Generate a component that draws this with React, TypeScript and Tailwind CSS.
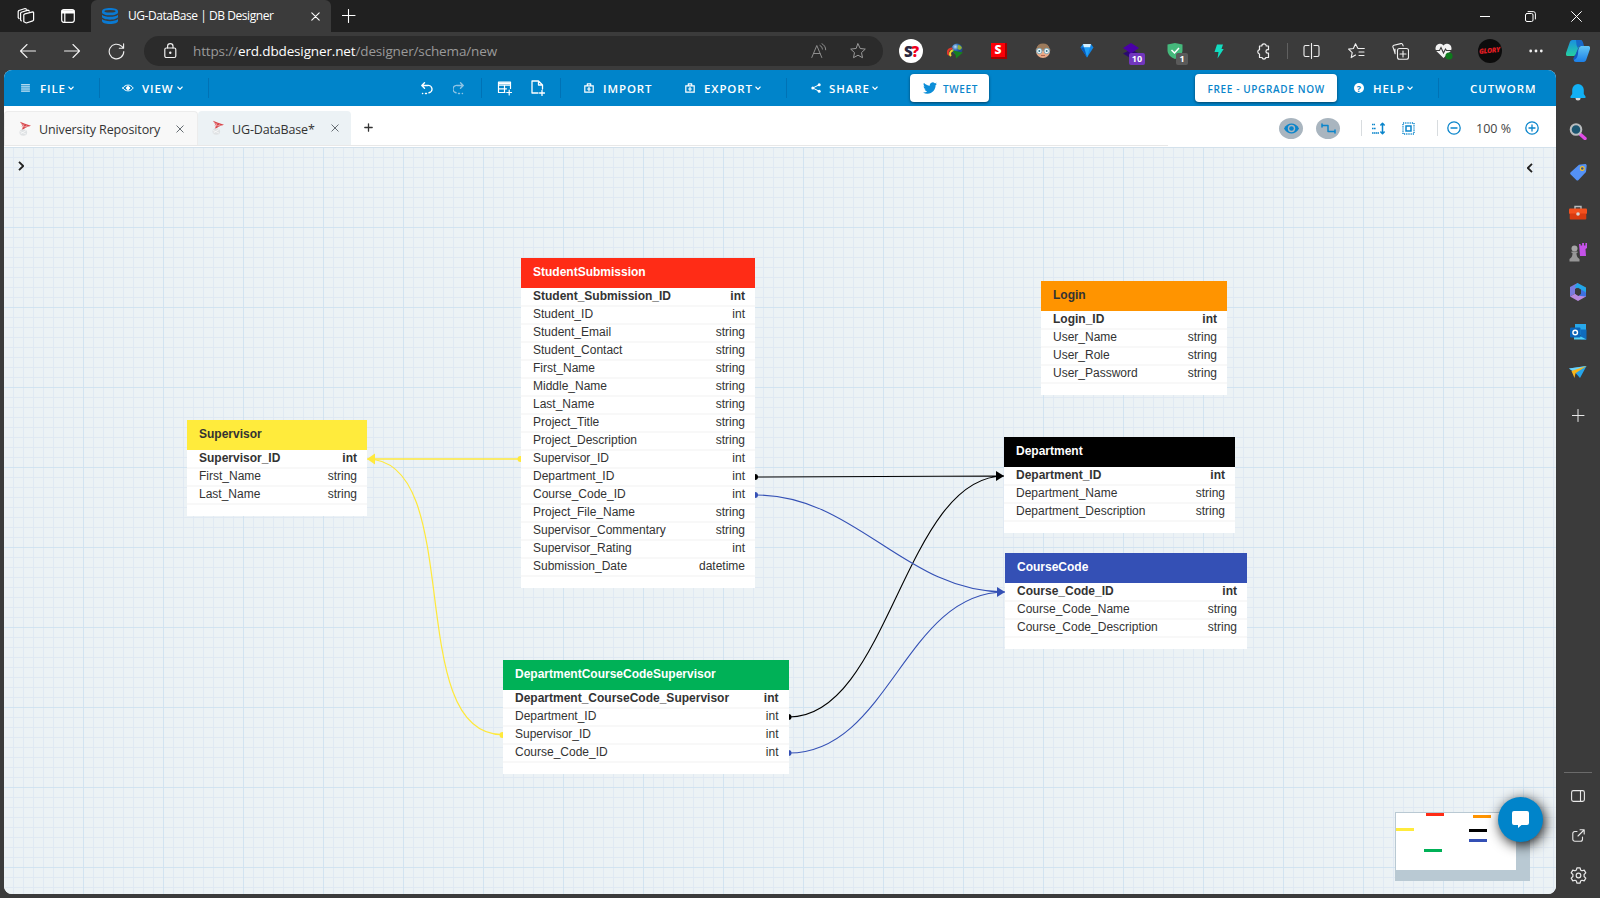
import React from "react";

type Field = [name: string, type: string];

interface TableDef {
  name: string;
  box: string;
  head: string;
  fields: Field[];
}

const TABLES: TableDef[] = [
  {
    name: "StudentSubmission",
    box: "left-[517px] top-[111px] w-[234px]",
    head: "bg-[#ff2c16] text-white",
    fields: [
      ["Student_Submission_ID", "int"],
      ["Student_ID", "int"],
      ["Student_Email", "string"],
      ["Student_Contact", "string"],
      ["First_Name", "string"],
      ["Middle_Name", "string"],
      ["Last_Name", "string"],
      ["Project_Title", "string"],
      ["Project_Description", "string"],
      ["Supervisor_ID", "int"],
      ["Department_ID", "int"],
      ["Course_Code_ID", "int"],
      ["Project_File_Name", "string"],
      ["Supervisor_Commentary", "string"],
      ["Supervisor_Rating", "int"],
      ["Submission_Date", "datetime"],
    ],
  },
  {
    name: "Supervisor",
    box: "left-[183px] top-[273px] w-[180px]",
    head: "bg-[#ffeb3c] text-[#333]",
    fields: [
      ["Supervisor_ID", "int"],
      ["First_Name", "string"],
      ["Last_Name", "string"],
    ],
  },
  {
    name: "Login",
    box: "left-[1037px] top-[134px] w-[186px]",
    head: "bg-[#ff9400] text-[#333]",
    fields: [
      ["Login_ID", "int"],
      ["User_Name", "string"],
      ["User_Role", "string"],
      ["User_Password", "string"],
    ],
  },
  {
    name: "Department",
    box: "left-[1000px] top-[290px] w-[231px]",
    head: "bg-black text-white",
    fields: [
      ["Department_ID", "int"],
      ["Department_Name", "string"],
      ["Department_Description", "string"],
    ],
  },
  {
    name: "CourseCode",
    box: "left-[1001px] top-[406px] w-[242px]",
    head: "bg-[#3450b5] text-white",
    fields: [
      ["Course_Code_ID", "int"],
      ["Course_Code_Name", "string"],
      ["Course_Code_Description", "string"],
    ],
  },
  {
    name: "DepartmentCourseCodeSupervisor",
    box: "left-[499px] top-[513px] w-[285.500px]",
    head: "bg-[#00b157] text-white",
    fields: [
      ["Department_CourseCode_Supervisor", "int"],
      ["Department_ID", "int"],
      ["Supervisor_ID", "int"],
      ["Course_Code_ID", "int"],
    ],
  },
];

function Svg({
  w,
  h = w,
  vb,
  sw = 1,
  className = "",
  children,
}: {
  w: number;
  h?: number;
  vb?: string;
  sw?: number;
  className?: string;
  children: React.ReactNode;
}) {
  return (
    <svg
      width={w}
      height={h}
      viewBox={vb ?? `0 0 ${w} ${h}`}
      fill="none"
      stroke="currentColor"
      strokeWidth={sw}
      strokeLinecap="round"
      strokeLinejoin="round"
      className={`block shrink-0 ${className}`}
    >
      {children}
    </svg>
  );
}

function Table({ t }: { t: TableDef }) {
  return (
    <div className={`absolute bg-white ${t.box}`}>
      <div className={`h-[30px] pl-3 text-[12px] leading-[29px] font-bold ${t.head}`}>{t.name}</div>
      <div className="pt-px pb-[11px] text-[12px] text-[#333]">
        {t.fields.map(([n, ty], i) => (
          <div
            key={n}
            className={`flex h-[18px] justify-between border-b-2 border-[#f8f8f8] pr-[10px] pl-3 leading-[14px] ${
              i === 0 ? "font-bold" : ""
            }`}
          >
            <span>{n}</span>
            <span>{ty}</span>
          </div>
        ))}
      </div>
    </div>
  );
}

function Chevron() {
  return (
    <Svg w={6} h={5} sw={1.1}>
      <path d="M.8 1L3 3.300 5.200 1" />
    </Svg>
  );
}

function Divider() {
  return <div className="h-5 w-px shrink-0 bg-[#0072b5]" />;
}

function Briefcase() {
  return (
    <Svg w={10} h={10} sw={1.2}>
      <path d="M.8 2.8h8.4v6.4H.8z" strokeLinejoin="miter" />
      <path d="M3.3 2.6V.8h3.4v1.8M5 4.3v3.4M3.6 6h2.8" />
    </Svg>
  );
}

function DbMark() {
  return (
    <svg width="14" height="16" viewBox="0 0 14 16" className="block shrink-0">
      <path d="M2 .8l5 2 6 2-5 1.800-4.500 3L5 5.500z" fill="#d8474c" />
      <path d="M3 2l3 3M6 3L4.500 7.500M9 4L7 6.500M3 5.500h8" stroke="#f0b9ba" strokeWidth=".5" />
      <ellipse cx="5.300" cy="11.500" rx="3.800" ry="3.200" fill="#dfe2e4" />
      <path d="M2 10.500l6 2.500M2.500 13l5.500-3.500" stroke="#fff" strokeWidth=".6" />
    </svg>
  );
}

function TitleBar() {
  return (
    <div className="flex h-8 items-center bg-[#202020] text-white">
      <div className="w-[41px] shrink-0 pl-[17px]">
        <Svg w={18} h={18} sw={1.2}>
          <path d="M6.200 8l1-.9 8-2.100.8.700v7.500l-.8.900-6.500 2.100L6.200 15z" transform="translate(.6 -.2)" />
          <path d="M4.300 13.800L3.600 13V6.200l.8-1 6.500-2.100 1.400.9" />
          <path d="M2 11.500l-.8-.8V4.300l.7-.8 6.200-2 1.400.8" />
        </Svg>
      </div>
      <div className="w-[50px] shrink-0 pl-5">
        <Svg w={14} h={14} sw={1.2}>
          <rect x=".7" y=".7" width="12.600" height="12.600" rx="2.200" />
          <path d="M1 1.800h12V4H1z" fill="currentColor" />
          <path d="M3.800 4v9" />
        </Svg>
      </div>
      <div className="flex h-8 w-[240px] shrink-0 items-center rounded-t-md bg-[#3b3b3b]">
        <div className="w-[37px] shrink-0 pl-[11px]">
          <svg width="16" height="16" viewBox="0 0 16 16" fill="#0a7ad3">
            <path d="M0 3C0 1.300 3.600 0 8 0s8 1.300 8 3v1.400C16 6 12.400 7.300 8 7.300S0 6 0 4.400z" />
            <path d="M0 6.700c1.500 1.400 4.500 2.100 8 2.100s6.500-.7 8-2.100v2.100c0 1.600-3.600 2.900-8 2.900S0 10.400 0 8.800z" />
            <path d="M0 11.100c1.500 1.400 4.500 2.100 8 2.100s6.500-.7 8-2.100V13c0 1.700-3.600 3-8 3s-8-1.300-8-3z" />
            <ellipse cx="8" cy="3.200" rx="5.600" ry="1.300" fill="#3b3b3b" />
          </svg>
        </div>
        <div className="w-[183px] shrink-0 font-['Open_Sans',sans-serif] text-[12px] tracking-[-0.450px] whitespace-nowrap">
          UG-DataBase | DB Designer
        </div>
        <Svg w={9} h={9} sw={1.1}>
          <path d="M.8.8l7.400 7.400M8.200.8L.8 8.200" />
        </Svg>
      </div>
      <div className="grow pl-[11px]">
        <Svg w={14} h={14} sw={1.1}>
          <path d="M6.500.5v13M0 6.500h13" />
        </Svg>
      </div>
      <div className="flex w-[138px] shrink-0">
        <div className="flex w-[46px] items-center justify-center">
          <div className="h-px w-[10px] bg-white" />
        </div>
        <div className="flex w-[46px] items-center justify-center pr-px">
          <Svg w={11} h={11}>
            <rect x=".5" y="2.500" width="7.500" height="8" rx="1.500" />
            <path d="M3 .6h5.200A2.200 2.200 0 0110.400 2.800V8" />
          </Svg>
        </div>
        <div className="flex w-[46px] items-center justify-center pr-px">
          <Svg w={11} h={11}>
            <path d="M.6.6l9.800 9.800M10.400.6L.6 10.400" />
          </Svg>
        </div>
      </div>
    </div>
  );
}

function Slot({ children, className = "w-11" }: { children?: React.ReactNode; className?: string }) {
  return <div className={`flex shrink-0 items-center justify-center ${className}`}>{children}</div>;
}

function AddressBar() {
  return (
    <div className="flex h-[38px] items-center bg-[#3b3b3b] text-[#f0f0f0]">
      <Slot className="ml-[6px] w-11">
        <Svg w={17} h={15} sw={1.1}>
          <path d="M15.500 7H.5M7 .5L.5 7 7 13.500" />
        </Svg>
      </Slot>
      <Slot>
        <Svg w={17} h={15} sw={1.1}>
          <path d="M.5 7h15M9 .5L15.500 7 9 13.500" />
        </Svg>
      </Slot>
      <Slot>
        <Svg w={17} h={17} sw={1.1}>
          <path d="M15.800 8.500a7.300 7.300 0 11-2.300-5.300L15.500 5M15.600.8v4.400h-4.300" />
        </Svg>
      </Slot>
      <div className="ml-[6px] flex h-[30px] w-[739px] shrink-0 items-center rounded-full bg-[#2b2b2b]">
        <div className="w-[49px] shrink-0 pl-5">
          <Svg w={13} h={16} sw={1.2}>
            <rect x=".8" y="5" width="11" height="9.500" rx="1.500" />
            <path d="M3.600 5V3.300a2.700 2.700 0 015.400 0V5" />
            <circle cx="6.300" cy="9.800" r=".6" fill="currentColor" />
          </Svg>
        </div>
        <div className="grow font-['Open_Sans',sans-serif] text-[13.500px] tracking-[-0.140px] whitespace-nowrap text-[#9a9a9a]">
          https://<span className="text-white">erd.dbdesigner.net</span>/designer/schema/new
        </div>
        <div className="w-[39px] shrink-0 text-[#8d8d8d]">
          <Svg w={16} h={16}>
            <path d="M.8 14.500L5.800 2.500l5 12M2.600 10.500h6.400M9 2.500c1.500.8 2.300 2 2.400 3.600M11 .8c2.300 1.200 3.600 3.200 3.700 6" />
          </Svg>
        </div>
        <div className="w-[33px] shrink-0 text-[#9a9a9a]">
          <Svg w={16} h={16}>
            <path d="M8 .8l2.200 4.700 5.100.6-3.800 3.500 1 5.100L8 12.200l-4.500 2.500 1-5.100L.7 6.100l5.100-.6z" />
          </Svg>
        </div>
      </div>
      <Slot className="ml-[6px] w-11">
        <div className="flex size-6 items-center justify-center rounded-full bg-white font-['Open_Sans',sans-serif] text-[15px] font-extrabold tracking-[-1px] text-[#2b2740]">
          S<span className="text-[#f0001c]">?</span>
        </div>
      </Slot>
      <Slot>
        <svg width="16" height="16" viewBox="0 0 16 16">
          <defs>
            <radialGradient id="globe" cx=".35" cy=".3">
              <stop offset="0" stopColor="#b9dcf8" />
              <stop offset=".6" stopColor="#2f6fb8" />
              <stop offset="1" stopColor="#1d4a90" />
            </radialGradient>
          </defs>
          <circle cx="10" cy="6" r="5.500" fill="url(#globe)" />
          <path d="M11 2c2 0 3.500 1 4 3l-2 2-2.500-1z" fill="#8fae3a" />
          <path d="M2 12C-.5 9.500 1 5.500 5.500 5.500" stroke="#e2382b" strokeWidth="2" fill="none" />
          <path d="M4 13C2 10.800 3 7.800 6.500 7.300" stroke="#f3d52f" strokeWidth="2" fill="none" />
          <path d="M5.500 7.500L16 9.500 9 15.500l-.3-3.300z" fill="#17821f" />
        </svg>
      </Slot>
      <Slot>
        <div className="h-4 w-4 border-r-2 border-b-2 border-[#a30000] bg-[#fb0007] text-center font-['Open_Sans',sans-serif] text-[12px] leading-[13px] font-extrabold text-white">
          S
        </div>
      </Slot>
      <Slot>
        <svg width="16" height="16" viewBox="0 0 16 16">
          <circle cx="8" cy="8" r="7" fill="#e8a987" />
          <path d="M1.500 6a6.600 6.600 0 0113 0z" fill="#9c7a5b" />
          <path d="M0 7h16" stroke="#6a5a50" strokeWidth="1" />
          <circle cx="4.300" cy="8" r="2.700" fill="#f1fafc" stroke="#7fa9b8" strokeWidth="1" />
          <circle cx="11.700" cy="8" r="2.700" fill="#f1fafc" stroke="#7fa9b8" strokeWidth="1" />
          <circle cx="4.300" cy="8" r="1" fill="#2f6f86" />
          <circle cx="11.700" cy="8" r="1" fill="#2f6f86" />
          <path d="M6 12.500h4" stroke="#b06a56" />
        </svg>
      </Slot>
      <Slot>
        <svg width="14" height="16" viewBox="0 0 14 16">
          <path d="M3 1h8l2.500 3.500L7 14.500.5 4.500z" fill="#1287e6" />
          <path d="M3 1h8l-1 3.500H4z" fill="#d4f0ff" />
          <path d="M4 4.500h6L7 14.500z" fill="#1ea0f8" />
          <path d="M.5 4.500H4L7 14.500z" fill="#0a58b8" />
        </svg>
      </Slot>
      <Slot>
        <div className="relative">
          <svg width="16" height="16" viewBox="0 0 16 16">
            <path d="M0 10.500l8-4 8 4-8 5z" fill="#2a0a70" />
            <path d="M0 5l8-5 8 5-8 5.500z" fill="#4a00a8" />
          </svg>
          <span className="absolute top-[10px] left-[6px] h-3 w-4 rounded-[2px] bg-[#7136bd] text-center font-['Open_Sans',sans-serif] text-[9px] leading-3 font-bold text-white">
            10
          </span>
        </div>
      </Slot>
      <Slot>
        <div className="relative">
          <svg width="16" height="16" viewBox="0 0 16 16">
            <path d="M8 0l7.500 1.500V7c0 4-3 7.500-7.500 9C3.500 14.500.5 11 .5 7V1.500z" fill="#45b97c" />
            <path d="M4.500 7l3 3 4.500-5" stroke="#fff" strokeWidth="1.500" fill="none" />
          </svg>
          <span className="absolute top-[10px] left-[9px] h-3 w-3 rounded-[2px] bg-[#5a5a5a] text-center font-['Open_Sans',sans-serif] text-[9px] leading-3 font-bold text-white">
            1
          </span>
        </div>
      </Slot>
      <Slot>
        <svg width="10" height="15" viewBox="0 0 10 15">
          <path d="M3 .5h6L7.500 5h2.200L3.500 14.500 4.500 8H.5z" fill="#12dcc0" />
        </svg>
      </Slot>
      <Slot>
        <Svg w={16} h={17} sw={1.2}>
          <path d="M4.500 3h2.300a2.200 2.200 0 014.400 0H13.500v3.700h-.8a1.700 1.700 0 000 3.500h.8V14.500h-2.600a2 2 0 01-3.900 0H4.500V11a2.200 2.200 0 010-4.300z" />
        </Svg>
      </Slot>
      <div className="ml-[2px] h-4 w-px shrink-0 bg-[#606060]" />
      <Slot className="ml-[2px] w-11 pr-px">
        <Svg w={17} h={16} sw={1.1}>
          <path d="M6 2.500H2.500A1.500 1.500 0 001 4v8a1.500 1.500 0 001.500 1.500H6M11 2.500h3.500A1.500 1.500 0 0116 4v8a1.500 1.500 0 01-1.500 1.500H11M8.500.5v15" />
        </Svg>
      </Slot>
      <Slot>
        <Svg w={17} h={16} sw={1.1}>
          <path d="M10.500 5.500L9.800 5.300 7.500.8 5.400 5.500l-4.800.6L4.200 9.600l-1 5 4.300-2.500M10.300 5.500h6M11 9h5M11 12.500h5" />
        </Svg>
      </Slot>
      <Slot>
        <Svg w={17} h={17} sw={1.1}>
          <rect x="5.500" y="5.500" width="11" height="10.800" rx="2" />
          <path d="M11 8v6M8 11h6M3.200 10.800L1 4.200c-.4-1 .1-1.600.9-1.900L8.800.6c.8-.2 1.500.1 1.800.8l.5 1.500M3 6v4.500" />
        </Svg>
      </Slot>
      <Slot>
        <svg width="18" height="17" viewBox="0 0 18 17">
          <path d="M8.500 15L1.500 8.200A4.200 4.200 0 018.500 2.500a4.200 4.200 0 017 5.700z" fill="#f2f2f2" />
          <path d="M0 7.500h4.500l1.500-3 2.500 5.500 2-4 1 1.500h5" stroke="#3b3b3b" strokeWidth="1.100" fill="none" />
          <circle cx="14" cy="13" r="3.600" fill="#0d7a1c" />
        </svg>
      </Slot>
      <Slot className="w-12">
        <div className="flex size-6 items-center justify-center rounded-full bg-[#0c0c0c] font-['Open_Sans',sans-serif] text-[7px] font-extrabold tracking-[-0.300px] text-[#e01c22] italic">
          <span className="-rotate-6">GLORY</span>
        </div>
      </Slot>
      <Slot>
        <Svg w={14} h={4}>
          <g fill="currentColor" stroke="none">
            <circle cx="1.700" cy="2" r="1.400" />
            <circle cx="7" cy="2" r="1.400" />
            <circle cx="12.300" cy="2" r="1.400" />
          </g>
        </Svg>
      </Slot>
      <Slot className="w-10">
        <svg width="24" height="22" viewBox="0 0 24 22">
          <defs>
            <linearGradient id="cpa" x1="0" y1="0" x2="0" y2="1">
              <stop offset="0" stopColor="#1a8fe0" />
              <stop offset="1" stopColor="#25d0a0" />
            </linearGradient>
            <linearGradient id="cpb" x1="0" y1="0" x2="0" y2="1">
              <stop offset="0" stopColor="#62c6f5" />
              <stop offset="1" stopColor="#1b7fe8" />
            </linearGradient>
          </defs>
          <path d="M6.500 0H14c2 0 2.500 1.500 2 3l-2.500 3L10 14c-.5 1.500-1.500 2-3 2H2c-2 0-2.500-1.500-2-3L3.500 3C4 1 5 0 6.500 0z" fill="url(#cpa)" />
          <path d="M10 0h4c2 0 2.800 1.500 3.200 3L18 6h-3c-2 0-2.500 1-3 2.500L10.500 5z" fill="#1769c8" />
          <path d="M17.500 22H10c-2 0-2.500-1.500-2-3l2-5 3-6c.5-1.500 1.500-2 3-2h6c2 0 2.500 1.500 2 3l-3.500 10c-.5 2-1.500 3-3 3z" fill="url(#cpb)" />
          <path d="M9.500 14.500l3-7L12 14c-.5 3-1.500 5-4 6-.8-.5-.8-1.500-.5-2z" fill="#1358c0" />
        </svg>
      </Slot>
    </div>
  );
}

function MenuBar() {
  const t = "shrink-0 whitespace-nowrap pt-[2px] -ml-px mr-px";
  return (
    <div className="flex h-9 shrink-0 items-center bg-[#0084ca] font-['Open_Sans',sans-serif] text-[11.500px] font-semibold tracking-[0.900px] text-white">
      <div className="w-[37px] shrink-0 pl-[17px]">
        <Svg w={9} h={8}>
          <path d="M.5.800h8M.500 2.900h8M.500 5h8M.500 7.100h8" />
        </Svg>
      </div>
      <div className={`w-[27px] ${t}`}>FILE</div>
      <div className="w-[31px] shrink-0"><Chevron /></div>
      <Divider />
      <div className="w-[43px] shrink-0 pl-[22px]">
        <Svg w={12} h={8}>
          <path d="M.8 4C3.300.100 8.700.100 11.200 4 8.700 7.900 3.300 7.900.8 4z" />
          <circle cx="6" cy="4" r="1.500" fill="currentColor" />
        </Svg>
      </div>
      <div className={`w-[34px] ${t}`}>VIEW</div>
      <div className="w-[31px] shrink-0"><Chevron /></div>
      <Divider />
      <div className="w-[212px] shrink-0" />
      <div className="w-8 shrink-0">
        <Svg w={12} h={13} sw={1.4}>
          <path d="M1 3.500h5.500a3.700 3.700 0 011.500 7.300M3.500.8L.8 3.500l2.700 2.700M1.500 11.500h.2M4.500 11.500h1" />
        </Svg>
      </div>
      <div className="w-7 shrink-0 text-[#8fc4e4]">
        <Svg w={12} h={13} sw={1.4}>
          <path d="M10 3.500H4.500A3.700 3.700 0 003 10.800M7.500.8l2.700 2.700-2.700 2.700M9.500 11.500h-.2M6.500 11.500h-1" />
        </Svg>
      </div>
      <Divider />
      <div className="w-[49px] shrink-0 pl-[15px]">
        <Svg w={15} h={15} sw={1.2}>
          <path d="M8 11.500H1.500V1h12v6.500M1.500 4.200h12M1.500 7.800h8M7.500 4v7.500M12.200 9v5M9.700 11.500h5" />
          <path d="M1.500 1.200h12v2h-12z" fill="currentColor" stroke="none" />
        </Svg>
      </div>
      <div className="w-[29px] shrink-0">
        <Svg w={14} h={16} sw={1.3}>
          <path d="M7 13H1V1h6.500l4 4v4M7.500 1v4h4M11 10.500v5M8.500 13h5" />
        </Svg>
      </div>
      <Divider />
      <div className="w-[43px] shrink-0 pl-[23px]"><Briefcase /></div>
      <div className={`w-[81px] ${t}`}>IMPORT</div>
      <div className="w-5 shrink-0"><Briefcase /></div>
      <div className={`w-[50px] ${t}`}>EXPORT</div>
      <div className="w-[31px] shrink-0"><Chevron /></div>
      <Divider />
      <div className="w-[43px] shrink-0 pl-6">
        <Svg w={10} h={10}>
          <path d="M8.300 1.700L1.800 5l6.500 3.300" />
          <g fill="currentColor" stroke="none">
            <circle cx="8.200" cy="1.700" r="1.500" />
            <circle cx="1.800" cy="5" r="1.500" />
            <circle cx="8.200" cy="8.300" r="1.500" />
          </g>
        </Svg>
      </div>
      <div className={`w-[42px] ${t}`}>SHARE</div>
      <div className="w-[38px] shrink-0"><Chevron /></div>
      <div className="flex h-7 w-[79px] shrink-0 items-center rounded bg-white pl-[13px] text-[10px] tracking-[0.600px] text-[#0a85cb] shadow-[0_1px_3px_rgba(0,0,0,0.5)]">
        <svg width="14" height="12" viewBox="0 0 24 20" fill="#0d8ed8" className="mr-[6px] block shrink-0">
          <path d="M23.950 2.570a10 10 0 01-2.820.77 4.960 4.960 0 002.160-2.720 9.900 9.900 0 01-3.120 1.180 4.920 4.920 0 00-8.380 4.480C7.690 6.090 4.070 4.130 1.640 1.160a4.820 4.820 0 00-.66 2.480c0 1.710.87 3.210 2.190 4.100a4.900 4.900 0 01-2.230-.62v.06a4.920 4.920 0 003.950 4.830 5 5 0 01-2.210.08 4.940 4.940 0 004.600 3.420A9.870 9.870 0 010 17.540a13.990 13.990 0 007.550 2.210c9.050 0 14-7.500 14-13.980 0-.21 0-.42-.02-.63a9.940 9.940 0 002.460-2.550z" />
        </svg>
        <span className="pt-[2px]">TWEET</span>
      </div>
      <div className="w-[206px] shrink-0" />
      <div className="flex h-7 w-[142px] shrink-0 items-center rounded bg-white pt-[2px] pl-[12.500px] text-[10px] tracking-[0.640px] whitespace-nowrap text-[#0a85cb] shadow-[0_1px_3px_rgba(0,0,0,0.5)]">
        FREE - UPGRADE NOW
      </div>
      <div className="w-[37px] shrink-0 pl-[17px]">
        <div className="flex size-[10px] items-center justify-center rounded-full bg-white text-[9px] leading-none font-bold tracking-normal text-[#0084ca]">?</div>
      </div>
      <div className={`w-[33px] ${t}`}>HELP</div>
      <div className="w-[31px] shrink-0"><Chevron /></div>
      <Divider />
      <div className={`pl-[32px] ${t}`}>CUTWORM</div>
    </div>
  );
}

function TabStrip() {
  const close = (
    <Svg w={8} h={8} className="text-[#666d73]">
      <path d="M.8.8l6.400 6.400M7.200.8L.8 7.200" />
    </Svg>
  );
  return (
    <div className="flex h-[41px] shrink-0 items-start bg-white font-['Open_Sans',sans-serif] text-[12.500px] text-[#333]">
      <div className="flex w-[1164px] shrink-0 items-end border-b border-[#e8e8e8] pt-[5px]">
        <div className="flex h-[34px] w-[194px] shrink-0 items-center rounded-t border border-b-0 border-[#ececec] bg-[#f8f8f8]">
          <div className="w-[34px] shrink-0 pl-[13px]"><DbMark /></div>
          <div className="w-[137px] shrink-0 pt-[3px] tracking-[-0.120px] whitespace-nowrap">University Repository</div>
          {close}
        </div>
        <div className="flex h-[34px] w-[153px] shrink-0 items-center rounded-t bg-[#ecf2f5]">
          <div className="w-[34px] shrink-0 pl-[13px]"><DbMark /></div>
          <div className="w-[99px] shrink-0 pt-[4px] tracking-[-0.150px] whitespace-nowrap">UG-DataBase*</div>
          {close}
        </div>
        <div className="flex h-[33px] items-center self-start pl-[13px]">
          <Svg w={9} h={9} sw={1.3}>
            <path d="M4.500.800v7.400M.800 4.500h7.400" />
          </Svg>
        </div>
      </div>
      <div className="flex h-[41px] w-[388px] items-center pt-[3px] text-[#0a85cb]">
        <div className="ml-[111px] flex h-[21px] w-6 shrink-0 items-center justify-center rounded-[50%] bg-[#a9b5bf]">
          <svg width="15" height="11" viewBox="0 0 15 11" fill="currentColor">
            <path d="M0 5.500C3.500-1.200 11.500-1.200 15 5.500 11.500 12.200 3.500 12.200 0 5.500z" />
            <circle cx="7.500" cy="5.500" r="3.700" fill="#a9b5bf" />
            <circle cx="7.500" cy="5.500" r="2.300" />
          </svg>
        </div>
        <div className="ml-[13px] flex h-[21px] w-6 shrink-0 items-center justify-center rounded-[50%] bg-[#a9b5bf]">
          <Svg w={15} h={11} sw={1.5}>
            <path d="M2 2.500h5v6h6M1 1v3M14 7v3" />
          </Svg>
        </div>
        <div className="ml-[21px] h-4 w-px shrink-0 bg-[#d8dcdf]" />
        <div className="w-[31px] shrink-0 pl-[9px]">
          <Svg w={14} h={13} sw={1.5}>
            <path d="M1 2.500h3M1 6.500h4M1 11h7" strokeDasharray="1.500 .4" strokeLinecap="butt" />
            <path d="M11.500 1.500v10M9.800 3l1.700-1.800L13.200 3M9.800 10l1.700 1.800L13.200 10" />
          </Svg>
        </div>
        <div className="w-11 shrink-0 pl-[9px]">
          <Svg w={13} h={13}>
            <rect x="1" y="1" width="11" height="11" strokeWidth="1.400" strokeDasharray="1.200 1" strokeLinecap="butt" />
            <rect x="4" y="4" width="5" height="5" strokeWidth="1.500" strokeLinejoin="miter" />
          </Svg>
        </div>
        <div className="h-4 w-px shrink-0 bg-[#d8dcdf]" />
        <div className="w-[38px] shrink-0 pl-[9px]">
          <Svg w={14} h={14} sw={1.3}>
            <circle cx="7" cy="7" r="6.200" />
            <path d="M4 7h6" />
          </Svg>
        </div>
        <div className="w-[49px] shrink-0 pt-[3px] text-[12.500px] whitespace-nowrap text-[#444]">100 %</div>
        <Svg w={14} h={14} sw={1.3}>
          <circle cx="7" cy="7" r="6.200" />
          <path d="M4 7h6M7 4v6" />
        </Svg>
      </div>
    </div>
  );
}

function Links() {
  return (
    <svg className="absolute inset-0" width="1552" height="747" viewBox="4 147 1552 747" fill="none" strokeWidth="1.100">
      <path d="M521 459H370" stroke="#ffe93b" strokeWidth="1.500" />
      <path d="M502 734.600C402 734.600 467 459 367 459" stroke="#ffe93b" strokeWidth="1.200" />
      <circle cx="520.500" cy="459" r="3" fill="#ffe93b" />
      <circle cx="502.500" cy="735" r="3" fill="#ffe93b" />
      <path d="M367 459l8-5.500v11z" fill="#ffe93b" />
      <path d="M756 477L1000 476M789 717C889 717 904 476 1004 476" stroke="#000" />
      <circle cx="755" cy="477" r="3" fill="#000" />
      <circle cx="788.500" cy="717" r="3" fill="#000" />
      <path d="M1004 476l-8-5v10z" fill="#000" />
      <path d="M756 495C856 495 905 592 1005 592M789 753C889 753 905 592 1005 592" stroke="#3450b5" />
      <circle cx="755" cy="495" r="3" fill="#3450b5" />
      <circle cx="788.500" cy="753" r="3" fill="#3450b5" />
      <path d="M1005 592l-8-5v10z" fill="#3450b5" />
    </svg>
  );
}

function MiniMap() {
  return (
    <div className="absolute top-[665px] left-[1391px] h-[69px] w-[135px] bg-[#b9c9d3]">
      <div className="absolute top-px left-px h-[57px] w-[119.500px] bg-white" />
      <div className="absolute top-px left-[31px] h-[3px] w-[18px] bg-[#ff2c16]" />
      <div className="absolute top-[3px] left-[78px] h-[3px] w-[18px] bg-[#ff9400]" />
      <div className="absolute top-[16px] left-px h-[3px] w-[18px] bg-[#ffeb3c]" />
      <div className="absolute top-[17px] left-[74px] h-[3px] w-[18px] bg-black" />
      <div className="absolute top-[27px] left-[74px] h-[3px] w-[18px] bg-[#3450b5]" />
      <div className="absolute top-[37px] left-[29px] h-[3px] w-[18px] bg-[#00b157]" />
    </div>
  );
}

function Canvas() {
  return (
    <div className="relative grow overflow-hidden border-t border-[#d3e1ec] bg-[#ecf2f5] font-['Liberation_Sans',Arial,sans-serif]">
      <div className="absolute -top-px left-0 h-[748px] w-[1552px]">
        <div className="absolute inset-0 bg-[linear-gradient(to_right,#d2e3f1_1px,transparent_1px),linear-gradient(to_bottom,#d2e3f1_1px,transparent_1px),linear-gradient(to_right,#e0e9f3_1px,transparent_1px),linear-gradient(to_bottom,#e0e9f3_1px,transparent_1px)] bg-[size:80px_80px,80px_80px,10px_10px,10px_10px] bg-[position:79px_0px,79px_0px,9px_0px,9px_0px]" />
        <Links />
        {TABLES.map((t) => (
          <Table key={t.name} t={t} />
        ))}
        <Svg w={7} h={10} sw={1.8} className="absolute top-[14px] left-[14px] text-[#222]">
          <path d="M1 .8L5.200 5 1 9.200" strokeLinecap="butt" />
        </Svg>
        <Svg w={7} h={10} sw={1.8} className="absolute top-[16px] left-[1522px] text-[#222]">
          <path d="M6 .8L1.800 5 6 9.200" strokeLinecap="butt" />
        </Svg>
        <MiniMap />
        <div className="absolute top-[650px] left-[1494px] flex size-[45px] items-center justify-center rounded-full bg-[#0084ca] shadow-[2px_3px_13px_rgba(0,0,0,0.9)]">
          <svg width="17" height="17" viewBox="0 0 17 17" fill="#fff">
            <path d="M2 0h13a2 2 0 012 2v10a2 2 0 01-2 2H9.500L6 17v-3H2a2 2 0 01-2-2V2a2 2 0 012-2z" />
          </svg>
        </div>
      </div>
    </div>
  );
}

function SideBar() {
  const cell = "flex h-10 shrink-0 items-center justify-center";
  return (
    <div className="flex w-11 shrink-0 flex-col bg-[#3b3b3b] pt-[2px] text-[#e8e8e8]">
      <div className={cell}>
        <svg width="16" height="17" viewBox="0 0 16 17">
          <path d="M5.500 14h5a2.500 2.500 0 01-5 0z" fill="#d8d8d8" />
          <path d="M8 0a5.800 5.800 0 015.800 5.800V10l1.700 2.500c.3.800 0 1.500-.8 1.500H1.300c-.8 0-1.100-.7-.8-1.500L2.200 10V5.800A5.800 5.800 0 018 0z" fill="#12b0f4" />
        </svg>
      </div>
      <div className={`${cell} pr-px pb-[2px]`}>
        <svg width="18" height="17" viewBox="0 0 18 17">
          <path d="M11.500 11.500l4.500 4" stroke="#e04be6" strokeWidth="3.400" strokeLinecap="round" />
          <circle cx="7" cy="6.500" r="5.300" fill="#1b5570" stroke="#b9bcbe" strokeWidth="2" />
        </svg>
      </div>
      <div className={cell}>
        <svg width="17" height="17" viewBox="0 0 17 17">
          <path d="M9 .8L15 0c1 0 1.700.7 1.700 1.700L16 8l-7.500 8c-.7.700-1.500.7-2.200 0L.7 10.500c-.7-.7-.7-1.500 0-2.200z" fill="#5491f5" />
          <circle cx="12.300" cy="4.500" r="1.900" fill="#37508f" stroke="#f5c22b" strokeWidth="1.200" />
        </svg>
      </div>
      <div className={cell}>
        <svg width="18" height="15" viewBox="0 0 18 15">
          <path d="M6 4V1.500h6V4" stroke="#b9bcbe" strokeWidth="1.400" fill="none" />
          <rect y="3.500" width="18" height="5.500" rx="1" fill="#f4511e" />
          <rect x=".7" y="8.500" width="16.600" height="6" rx="1" fill="#d83b10" />
          <circle cx="9" cy="9" r="1.800" fill="#d6d6d6" />
        </svg>
      </div>
      <div className={cell}>
        <svg width="18" height="19" viewBox="0 0 18 19">
          <path d="M10 1h1.600v1.500h1.500V0h1.900v2.500h1.400V0H18v5l-1.500 1 .5 7h-6z" fill="#c452e8" />
          <circle cx="5.500" cy="5.500" r="3" fill="#a5a5a5" />
          <path d="M2.500 8.500h6v1.500H7.500c0 3 .8 4.500 3 6V18.500H.500V16c2.200-1.500 3-3 3-6h-1z" fill="#969696" />
        </svg>
      </div>
      <div className={cell}>
        <svg width="18" height="18" viewBox="0 0 18 18">
          <path d="M8.500 0L1 4v9.500l5-2.800V6l5.500-3.300z" fill="#7a7be0" />
          <path d="M8.500 0l8.500 4.500v6L12 7.500 5.500 4z" fill="#23a6e8" />
          <path d="M17 9v4.500L9 18l-8-4.500 5-2.800 3.500 2.200z" fill="#b98be0" />
          <path d="M12 6.500l5 3v4l-7.500-.8L12 11z" fill="#3d6fe0" />
          <path d="M6 6.500L9 4.800l3 1.700v4L9 12.400l-3-1.900z" fill="#3b3b3b" />
        </svg>
      </div>
      <div className={cell}>
        <svg width="17" height="16" viewBox="0 0 17 16">
          <rect x="5" width="11" height="11" fill="#28a8ea" />
          <rect x="10.500" y="5.500" width="6" height="10" fill="#0f6cbd" />
          <path d="M4 15.500V9l12.500 6.500z" fill="#50d0f8" />
          <rect y="3.500" width="10.500" height="10" rx="1" fill="#0a64b8" />
          <circle cx="5.200" cy="8.500" r="2.300" fill="none" stroke="#fff" strokeWidth="1.400" />
        </svg>
      </div>
      <div className={cell}>
        <svg width="18" height="13" viewBox="0 0 18 13">
          <path d="M0 2.500L17.500 0l-6.500 12-3.500-4z" fill="#25a5ec" />
          <path d="M0 2.500L17.500 0 5 6z" fill="#6dd3f7" />
          <path d="M2.500 5L17.500 0 6.500 7.200 5.500 12z" fill="#f7b51b" />
        </svg>
      </div>
      <div className={`${cell} mt-[3px]`}>
        <Svg w={13} h={13}>
          <path d="M6 .5v12M0 6.500h12" />
        </Svg>
      </div>
      <div className="grow" />
      <div className="mx-2 h-px shrink-0 bg-[#6a6a6a]" />
      <div className={`${cell} mt-[3px]`}>
        <Svg w={14} h={12} sw={1.1}>
          <rect x=".6" y=".6" width="12.800" height="10.800" rx="1.800" />
          <path d="M9.500.6v10.800" />
        </Svg>
      </div>
      <div className={`${cell} pb-px`}>
        <Svg w={13} h={13} sw={1.1}>
          <path d="M5 2.500H2.800A2 2 0 00.8 4.500v5.700a2 2 0 002 2h5.700a2 2 0 002-2V8M8 .8h4.200V5M12 1L6 7" />
        </Svg>
      </div>
      <div className={`${cell} mb-[2px] pb-px`}>
        <Svg w={17} h={17} sw={1.2}>
          <circle cx="8.500" cy="8.500" r="2.300" />
          <path d="M6.900.8h3.200l.5 2.200 1.400.8 2.200-.7 1.600 2.800-1.700 1.600v2l1.700 1.600-1.600 2.800-2.200-.7-1.400.8-.5 2.200H6.900L6.400 14 5 13.200l-2.200.7-1.600-2.800 1.700-1.600v-2L1.200 5.900l1.600-2.800 2.200.7L6.400 3z" />
        </Svg>
      </div>
    </div>
  );
}

export default function App() {
  return (
    <div className="flex h-[898px] w-[1600px] flex-col overflow-hidden bg-[#3b3b3b]">
      <TitleBar />
      <AddressBar />
      <div className="flex h-[828px]">
        <div className="mb-1 ml-1 flex w-[1552px] shrink-0 flex-col overflow-hidden rounded-lg bg-white">
          <MenuBar />
          <TabStrip />
          <Canvas />
        </div>
        <SideBar />
      </div>
    </div>
  );
}
